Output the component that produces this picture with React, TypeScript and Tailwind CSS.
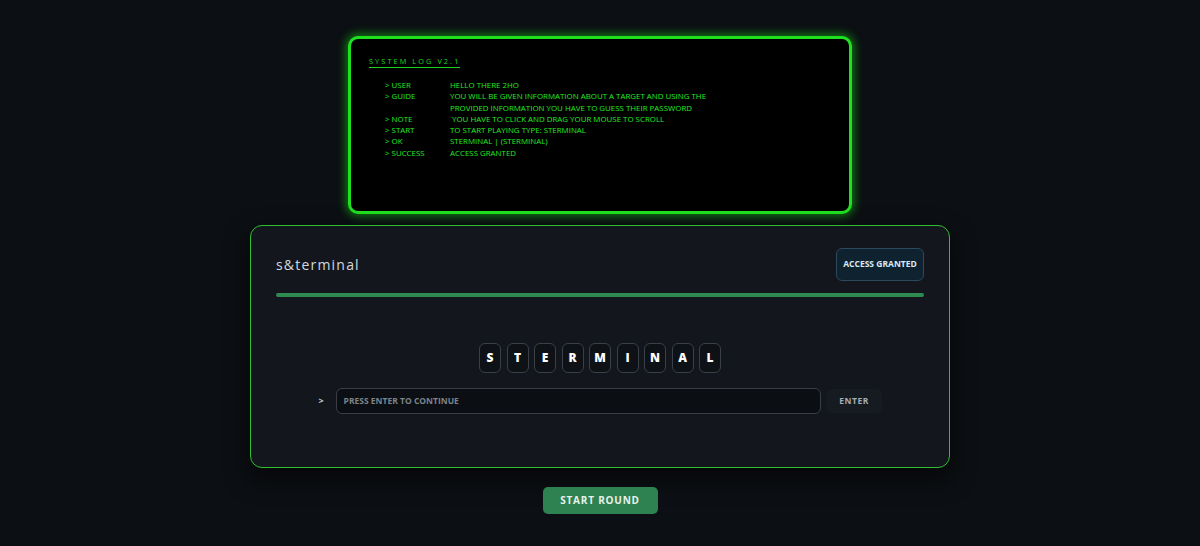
import React from "react"

const logLines: [string, string[]][] = [
  ["> USER", ["HELLO THERE 2HO"]],
  [
    "> GUIDE",
    [
      "YOU WILL BE GIVEN INFORMATION ABOUT A TARGET AND USING THE",
      "PROVIDED INFORMATION YOU HAVE TO GUESS THEIR PASSWORD",
    ],
  ],
  ["> NOTE", [" YOU HAVE TO CLICK AND DRAG YOUR MOUSE TO SCROLL"]],
  ["> START", ["TO START PLAYING TYPE: STERMINAL"]],
  ["> OK", ["STERMINAL | (STERMINAL)"]],
  ["> SUCCESS", ["ACCESS GRANTED"]],
]

const letters = "STERMINAL".split("")

export default function App() {
  return (
    <div
      className="min-h-[546px] w-full bg-[#0c0f13] flex flex-col items-center pt-[36px]"
      style={{ fontFamily: '"Open Sans", "Noto Sans", sans-serif' }}
    >
      {/* system log */}
      <div className="w-[504px] h-[178px] rounded-[10px] border-[3px] border-[#1fe01f] bg-black shadow-[0_0_10px_2px_rgba(20,220,20,0.55)] px-[18px] pt-[17px]">
        <div className="w-fit text-[7.3px] tracking-[2.1px] text-[#22d622] border-b border-[#1fd11f] pb-[1px] leading-[10px]">
          SYSTEM LOG V2.1
        </div>
        <div className="mt-[12px] pl-[16px] text-[7.9px] font-medium leading-[11.3px] text-[#24ea24]">
          {logLines.map(([label, values]) => (
            <div key={label} className="flex">
              <div className="w-[65px] shrink-0">{label}</div>
              <div>
                {values.map((v) => (
                  <div key={v} className="whitespace-pre">
                    {v}
                  </div>
                ))}
              </div>
            </div>
          ))}
        </div>
      </div>

      {/* game card */}
      <div className="mt-[11px] w-[700px] h-[243px] rounded-[12px] border border-[#2fbf2f] bg-[#13171d] shadow-[0_10px_24px_rgba(0,0,0,0.6)] px-[25px] pt-[22px]">
        <div className="flex items-center justify-between">
          <div className="text-[14px] tracking-[1.2px] text-[#d3d8dd]">s&amp;terminal</div>
          <div className="h-[33px] w-[88px] rounded-[6px] border border-[#2b4a5b] bg-[#0f2230] flex items-center justify-center text-[8.5px] font-bold text-[#dbe9f2]">
            ACCESS GRANTED
          </div>
        </div>
        <div className="mt-[12px] h-[4px] rounded-full bg-[#2f8a50]" />

        <div className="mt-[46px] flex justify-center gap-[5.5px]">
          {letters.map((l, i) => (
            <div
              key={i}
              className="w-[22px] h-[30px] rounded-[6px] border border-[#3a4048] bg-[#0e1217] flex items-center justify-center text-[12px] font-extrabold text-white"
            >
              {l}
            </div>
          ))}
        </div>

        <div className="mt-[15px] flex items-center justify-center">
          <span className="text-[9px] font-bold text-[#c8ccd0] mr-[12px]">&gt;</span>
          <div className="w-[485px] h-[26px] rounded-[6px] border border-[#393e45] bg-[#0b0e12] flex items-center px-[7px] text-[8.5px] font-bold text-[#7d838a]">
            PRESS ENTER TO CONTINUE
          </div>
          <div className="ml-[6px] w-[55px] h-[24px] rounded-[5px] bg-[#161b21] flex items-center justify-center text-[8.5px] font-bold tracking-[0.5px] text-[#a7adb3]">
            ENTER
          </div>
        </div>
      </div>

      <div className="mt-[19px] w-[115px] h-[27px] rounded-[5px] bg-[#2e8150] flex items-center justify-center text-[10px] font-bold tracking-[0.8px] text-[#e8f1ea]">
        START ROUND
      </div>
    </div>
  )
}
